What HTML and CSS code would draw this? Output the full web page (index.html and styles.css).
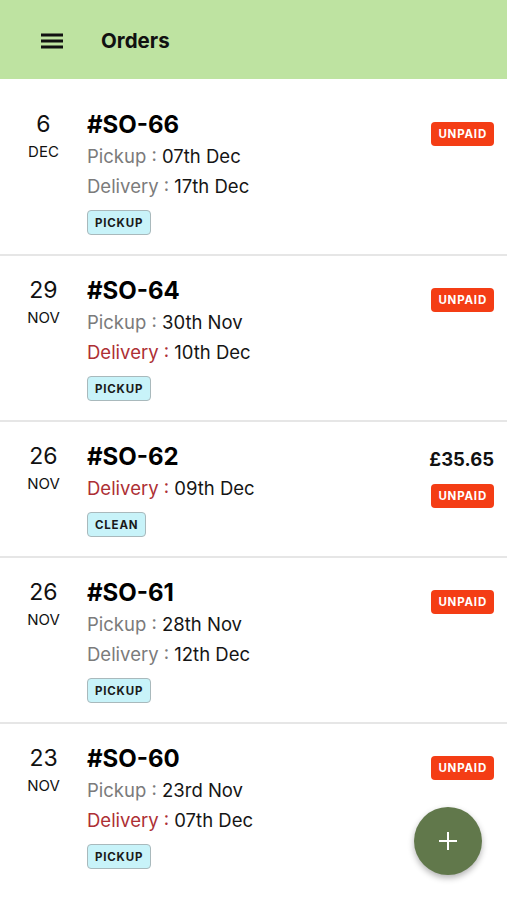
FILE: index.html
```html
<!DOCTYPE html>
<html lang="en">
<head>
<meta charset="UTF-8">
<meta name="viewport" content="width=device-width, initial-scale=1.0">
<title>Orders</title>
<link rel="stylesheet" href="styles.css">
</head>
<body>

<header class="topbar">
  <button class="menu-btn" title="Menu">
    <svg width="22" height="16" viewBox="0 0 22 16"><rect x="0" y="0.5" width="22" height="3" fill="#111"/><rect x="0" y="6.5" width="22" height="3" fill="#111"/><rect x="0" y="12.5" width="22" height="3" fill="#111"/></svg>
  </button>
  <div class="topbar-title">Orders</div>
</header>

<div class="order-list">
  <div class="order">
    <div class="order-date">
      <div class="day">6</div>
      <div class="month">DEC</div>
    </div>
    <div class="order-info">
      <div class="order-no">#SO-66</div>
      <div class="line"><span class="lbl">Pickup :</span> 07th Dec</div>
      <div class="line"><span class="lbl">Delivery :</span> 17th Dec</div>
      <span class="tag">PICKUP</span>
    </div>
    <div class="order-side">
      <span class="status">UNPAID</span>
    </div>
  </div>

  <div class="order">
    <div class="order-date">
      <div class="day">29</div>
      <div class="month">NOV</div>
    </div>
    <div class="order-info">
      <div class="order-no">#SO-64</div>
      <div class="line"><span class="lbl">Pickup :</span> 30th Nov</div>
      <div class="line"><span class="lbl late">Delivery :</span> 10th Dec</div>
      <span class="tag">PICKUP</span>
    </div>
    <div class="order-side">
      <span class="status">UNPAID</span>
    </div>
  </div>

  <div class="order">
    <div class="order-date">
      <div class="day">26</div>
      <div class="month">NOV</div>
    </div>
    <div class="order-info">
      <div class="order-no">#SO-62</div>
      <div class="line"><span class="lbl late">Delivery :</span> 09th Dec</div>
      <span class="tag">CLEAN</span>
    </div>
    <div class="order-side has-price">
      <div class="price">£35.65</div>
      <span class="status">UNPAID</span>
    </div>
  </div>

  <div class="order">
    <div class="order-date">
      <div class="day">26</div>
      <div class="month">NOV</div>
    </div>
    <div class="order-info">
      <div class="order-no">#SO-61</div>
      <div class="line"><span class="lbl">Pickup :</span> 28th Nov</div>
      <div class="line"><span class="lbl">Delivery :</span> 12th Dec</div>
      <span class="tag">PICKUP</span>
    </div>
    <div class="order-side">
      <span class="status">UNPAID</span>
    </div>
  </div>

  <div class="order">
    <div class="order-date">
      <div class="day">23</div>
      <div class="month">NOV</div>
    </div>
    <div class="order-info">
      <div class="order-no">#SO-60</div>
      <div class="line"><span class="lbl">Pickup :</span> 23rd Nov</div>
      <div class="line"><span class="lbl late">Delivery :</span> 07th Dec</div>
      <span class="tag">PICKUP</span>
    </div>
    <div class="order-side">
      <span class="status">UNPAID</span>
    </div>
  </div>
</div>

<button class="fab" title="New order">
  <svg width="20" height="20" viewBox="0 0 20 20"><path d="M10 1v18M1 10h18" stroke="#fff" stroke-width="2"/></svg>
</button>

</body>
</html>
```

FILE: styles.css
```css
*, *::before, *::after { box-sizing: border-box; margin: 0; padding: 0; }
html, body { height: 100%; overflow: hidden; }
body {
  background: #fff;
  font-family: 'Inter', 'Liberation Sans', sans-serif;
  color: #111;
}

.topbar {
  height: 79px;
  background: #bee3a1;
  display: flex;
  align-items: center;
  padding: 2px 0 0 41px;
}
.menu-btn {
  background: none; border: none;
  width: 22px; height: 16px;
  display: flex;
  cursor: pointer;
}
.topbar-title {
  margin-left: 38px;
  font-size: 20.5px;
  font-weight: 700;
  color: #111;
}

.order-list { padding-top: 11px; }

.order {
  display: flex;
  align-items: flex-start;
  padding: 18px 13px 19px 15px;
  border-bottom: 2px solid #e6e6e6;
}
.order:last-child { border-bottom: none; }

.order-date {
  width: 57px;
  text-align: center;
  flex-shrink: 0;
}
.day { font-size: 23px; line-height: 33px; color: #111; }
.month { font-size: 15px; line-height: 22px; color: #111; }

.order-info {
  flex: 1;
  margin-left: 15px;
  display: flex;
  flex-direction: column;
  align-items: flex-start;
}
.order-no {
  font-size: 24px;
  font-weight: 700;
  line-height: 33px;
  color: #000;
}
.line {
  font-size: 18.5px;
  line-height: 30px;
  color: #151515;
}
.lbl { color: #7b7b7b; }
.lbl.late { color: #ad2f34; }

.tag {
  margin-top: 9px;
  height: 25px;
  padding: 0 7px;
  display: inline-flex;
  align-items: center;
  background: #c8f3f9;
  border: 1px solid #a9b9bc;
  border-radius: 4px;
  font-size: 11.5px;
  font-weight: 700;
  letter-spacing: 0.8px;
  color: #1a1a1a;
}

.order-side {
  display: flex;
  flex-direction: column;
  align-items: flex-end;
  padding-top: 14px;
}
.order-side.has-price { padding-top: 9px; }
.price {
  font-size: 18.5px;
  font-weight: 700;
  line-height: 20px;
  color: #111;
  margin-bottom: 15px;
}
.status {
  height: 24px;
  padding: 0 7px;
  display: inline-flex;
  align-items: center;
  background: #f43d15;
  border-radius: 4px;
  font-size: 11.5px;
  font-weight: 700;
  letter-spacing: 0.8px;
  color: #fff;
}

.fab {
  position: fixed;
  left: 414px; top: 807px;
  width: 68px; height: 68px;
  border-radius: 50%;
  border: none;
  background: #61784b;
  box-shadow: 0 3px 6px rgba(0, 0, 0, 0.3);
  display: flex;
  align-items: center;
  justify-content: center;
  cursor: pointer;
}
```
